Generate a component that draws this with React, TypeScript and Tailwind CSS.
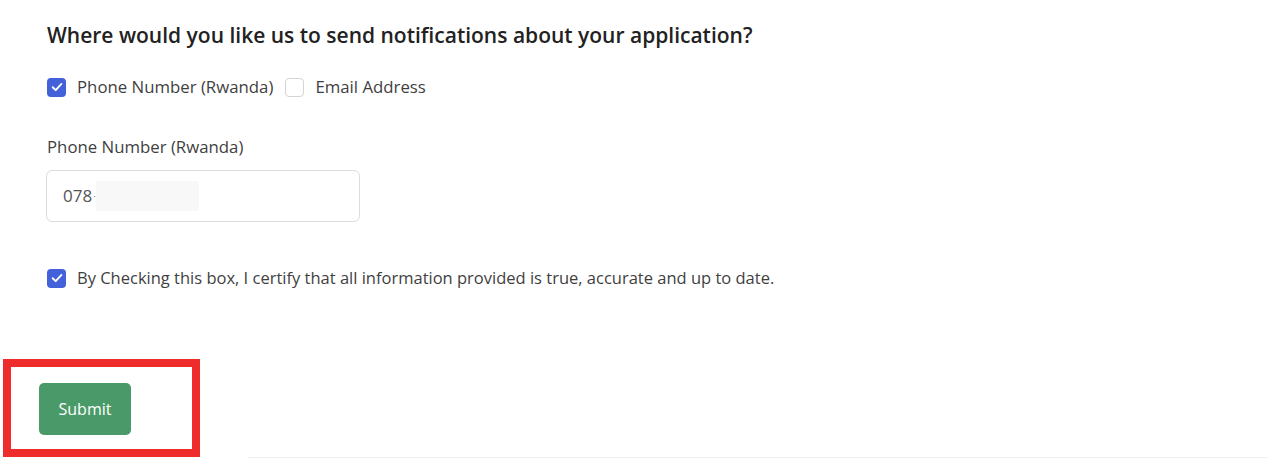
import React, { useState } from 'react';

const CheckIcon = () => (
  <svg className="w-[14px] h-[14px]" viewBox="0 0 12 12" fill="none" stroke="white" strokeWidth={1.6} strokeLinecap="round" strokeLinejoin="round">
    <path d="M2.3 6.2 L4.9 8.7 L9.8 3.4" />
  </svg>
);

interface CheckboxProps {
  checked: boolean;
  onChange: () => void;
  label: string;
  small?: boolean;
}

const Checkbox: React.FC<CheckboxProps> = ({ checked, onChange, label, small }) => (
  <label className="flex items-center cursor-pointer">
    <span
      onClick={onChange}
      className={`w-[19px] h-[19px] rounded-[4px] flex items-center justify-center ${
        checked ? 'bg-[#4361d8]' : 'bg-white border border-[#d4d4d8]'
      }`}
    >
      {checked && <CheckIcon />}
    </span>
    <span className={`ml-[11px] text-[#3f3f3f] ${small ? 'text-[16.5px]' : 'text-[16.8px]'}`}>{label}</span>
  </label>
);

export default function App() {
  const [phone, setPhone] = useState(true);
  const [email, setEmail] = useState(false);
  const [certify, setCertify] = useState(true);

  return (
    <div className="w-[1268px] h-[459px] bg-white flex flex-col" style={{ fontFamily: '"Open Sans", sans-serif' }}>
      <div className="pl-[47px] pt-[22px]">
        <h2 className="text-[21px] font-semibold text-[#222] leading-[26px]">
          Where would you like us to send notifications about your application?
        </h2>

        <div className="flex items-center gap-[12px] mt-[29px] h-[20px]">
          <Checkbox checked={phone} onChange={() => setPhone(!phone)} label="Phone Number (Rwanda)" />
          <Checkbox checked={email} onChange={() => setEmail(!email)} label="Email Address" />
        </div>

        <div className="mt-[40px] text-[16.8px] text-[#3f3f3f] leading-[20px]">Phone Number (Rwanda)</div>

        <div className="mt-[13px] w-[314px] h-[52px] border border-[#dcdcdc] rounded-[6px] flex items-center pl-[16px] -ml-[1px]">
          <span className="text-[17px] text-[#555]">078</span>
          <span className="text-[#999] text-[10px] ml-[1px]">·</span>
          <div className="w-[103px] h-[30px] bg-[#f8f8f8]" />
        </div>

        <div className="mt-[46px] h-[20px] flex items-center">
          <Checkbox
            small
            checked={certify}
            onChange={() => setCertify(!certify)}
            label="By Checking this box, I certify that all information provided is true, accurate and up to date."
          />
        </div>
      </div>

      <div className="flex items-end mt-auto">
        <div className="ml-[3px] mb-[2px] w-[197px] h-[98px] border-[8px] border-[#ee2c2c] pl-[28px] pt-[16px]">
          <button className="w-[92px] h-[52px] rounded-[5px] bg-[#4a9a69] text-white text-[16px]">
            Submit
          </button>
        </div>
        <div className="flex-1 ml-[48px] border-b border-[#f0f0f0] mb-[1px]" />
      </div>
    </div>
  );
}
